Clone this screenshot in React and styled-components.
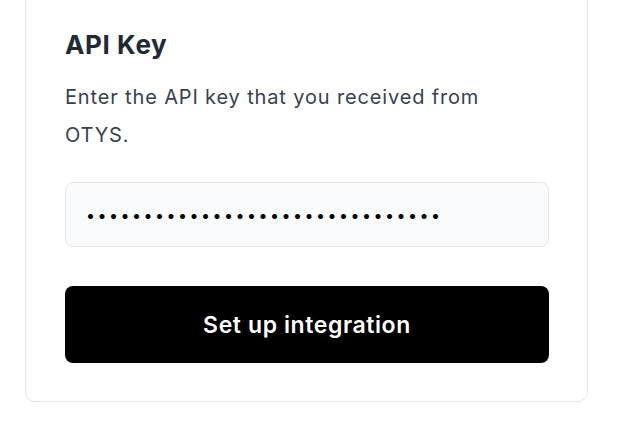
import React from "react";
import styled, { createGlobalStyle } from "styled-components";

const Global = createGlobalStyle`
  html, body { margin: 0; padding: 0; background: #ffffff; }
  body { font-family: Inter, "Noto Sans", Roboto, sans-serif; -webkit-font-smoothing: antialiased; }
  * { box-sizing: border-box; }
`;

const Page = styled.div`
  width: 618px;
  height: 422px;
  overflow: hidden;
  background: #ffffff;
`;

const Card = styled.section`
  margin: -12px 0 0 25px;
  width: 563px;
  border: 1px solid #e5e7eb;
  border-radius: 10px;
  background: #ffffff;
  padding: 40px 38px 38px 39px;
  display: flex;
  flex-direction: column;
`;

const Title = styled.h2`
  margin: 0;
  font-size: 26px;
  line-height: 32px;
  font-weight: 700;
  color: #1f2937;
  letter-spacing: 0.6px;
`;

const Description = styled.p`
  margin: 17px 0 0;
  max-width: 460px;
  font-size: 20px;
  line-height: 38px;
  font-weight: 400;
  color: #374151;
  letter-spacing: 0.85px;
`;

const KeyInput = styled.input`
  margin-top: 28px;
  width: 100%;
  height: 65px;
  padding: 0 20px;
  border: 1px solid #e5e7eb;
  border-radius: 8px;
  background: #f9fafb;
  font-family: Inter, "Noto Sans", sans-serif;
  font-size: 16px;
  letter-spacing: 2.5px;
  color: #000000;
  outline: none;
`;

const Button = styled.button`
  margin-top: 39px;
  width: 100%;
  height: 77px;
  border: none;
  border-radius: 8px;
  background: #000000;
  color: #ffffff;
  font-family: Inter, "Noto Sans", sans-serif;
  font-size: 23px;
  font-weight: 600;
  letter-spacing: 0.6px;
  cursor: pointer;
`;

export default function App() {
  return (
    <Page>
      <Global />
      <Card>
        <Title>API Key</Title>
        <Description>Enter the API key that you received from OTYS.</Description>
        <KeyInput type="password" defaultValue={"x".repeat(31)} readOnly />
        <Button type="button">Set up integration</Button>
      </Card>
    </Page>
  );
}
